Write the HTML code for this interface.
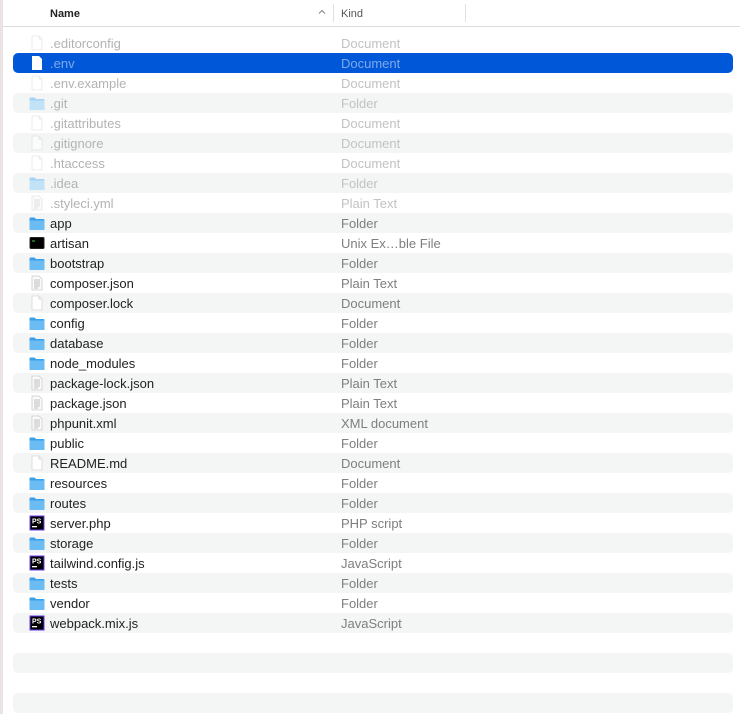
<!DOCTYPE html>
<html><head><meta charset="utf-8"><style>
*{margin:0;padding:0;box-sizing:border-box}
body{width:740px;height:714px;overflow:hidden;background:#fff;font-family:"Liberation Sans",Helvetica,sans-serif;position:relative}
.lb{position:absolute;left:0;top:0;width:3px;height:714px;background:#ebe3e3}
.hdr{position:absolute;left:3px;top:0;width:737px;height:27px;border-bottom:1px solid #dcdcdc;font-size:11px;color:#222}
.hdr .n{position:absolute;left:47px;top:8px;font-weight:bold}
.hdr .k{position:absolute;left:338px;top:8px;color:#555}
.hdr .d1{position:absolute;left:330px;top:4px;width:1px;height:18px;background:#e0e0e0}
.hdr .d2{position:absolute;left:462px;top:4px;width:1px;height:18px;background:#e0e0e0}
.hdr .ch{position:absolute;left:314px;top:7px;width:10px;height:10px}
.r{position:absolute;left:13px;width:720px;height:20px;font-size:13px;line-height:20px;color:#222}
.s{background:#f4f5f5;border-radius:5px}
.sel{background:#0058d8;border-radius:5px;color:#7fa9e8}
.sel .k{color:#7fa9e8!important}
.r .n{position:absolute;left:37px;top:1px}
.r .k{position:absolute;left:328px;top:1px;color:#7e7e7e}
.h .n{color:#b3b3b3}.h .k{color:#c2c2c2}
.i{position:absolute;left:16px;top:2px;width:16px;height:16px}
</style></head><body>
<div class="lb"></div>
<div class="hdr"><span class="n">Name</span><svg class="ch" viewBox="0 0 10 10"><path d="M2 6.5L5 3.5L8 6.5" stroke="#888" fill="none" stroke-width="1.1"/></svg><div class="d1"></div><span class="k">Kind</span><div class="d2"></div></div>

<svg width="0" height="0" style="position:absolute"><defs>
<symbol id="doc" viewBox="0 0 16 16"><path d="M3 1h7l3 3v11H3z" fill="#fff" stroke="#d8d8d8" stroke-width=".8"/><path d="M10 1v3h3" fill="#eee" stroke="#d8d8d8" stroke-width=".8"/></symbol>
<symbol id="txt" viewBox="0 0 16 16"><path d="M3 1h7l3 3v11H3z" fill="#fafafa" stroke="#ccc" stroke-width=".8"/><path d="M5 5h6M5 7h6M5 9h6M5 11h6M5 13h4" stroke="#aaa" stroke-width=".8"/></symbol>
<symbol id="fol" viewBox="0 0 16 16"><path d="M0.5 3.5a1 1 0 0 1 1-1h4l1.5 1.5h7.5a1 1 0 0 1 1 1v9a1 1 0 0 1-1 1h-13a1 1 0 0 1-1-1z" fill="#3a9fe6"/><path d="M0.5 5.5h15v8.5a1 1 0 0 1-1 1h-13a1 1 0 0 1-1-1z" fill="#6bbcf2"/></symbol>
<symbol id="folh" viewBox="0 0 16 16"><path d="M0.5 3.5a1 1 0 0 1 1-1h4l1.5 1.5h7.5a1 1 0 0 1 1 1v9a1 1 0 0 1-1 1h-13a1 1 0 0 1-1-1z" fill="#a6d3f3"/><path d="M0.5 5.5h15v8.5a1 1 0 0 1-1 1h-13a1 1 0 0 1-1-1z" fill="#c2e2f8"/></symbol>
<symbol id="exe" viewBox="0 0 16 16"><rect x="0.5" y="2" width="15" height="12" rx="1.5" fill="#222"/><rect x="1.5" y="3" width="13" height="10" fill="#000"/><path d="M3 6h3" stroke="#4c4" stroke-width="1"/></symbol>
<symbol id="ps" viewBox="0 0 16 16"><rect x="1" y="1" width="14" height="14" fill="#000" stroke="#6a3cf0" stroke-width="1"/><text x="3" y="8.5" font-size="7" font-weight="bold" fill="#fff" font-family="Liberation Sans">PS</text><rect x="3" y="11" width="5" height="1.3" fill="#fff"/></symbol>
</defs></svg>

<div class="r h" style="top:33px"><svg class="i" style="opacity:.6"><use href="#doc"/></svg><span class="n">.editorconfig</span><span class="k">Document</span></div>
<div class="r sel" style="top:53px"><svg class="i"><path d="M3 1h7l3 3v11H3z" fill="#fff"/></svg><span class="n">.env</span><span class="k">Document</span></div>
<div class="r h" style="top:73px"><svg class="i" style="opacity:.6"><use href="#doc"/></svg><span class="n">.env.example</span><span class="k">Document</span></div>
<div class="r h s" style="top:93px"><svg class="i"><use href="#folh"/></svg><span class="n">.git</span><span class="k">Folder</span></div>
<div class="r h" style="top:113px"><svg class="i" style="opacity:.6"><use href="#doc"/></svg><span class="n">.gitattributes</span><span class="k">Document</span></div>
<div class="r h s" style="top:133px"><svg class="i" style="opacity:.6"><use href="#doc"/></svg><span class="n">.gitignore</span><span class="k">Document</span></div>
<div class="r h" style="top:153px"><svg class="i" style="opacity:.6"><use href="#doc"/></svg><span class="n">.htaccess</span><span class="k">Document</span></div>
<div class="r h s" style="top:173px"><svg class="i"><use href="#folh"/></svg><span class="n">.idea</span><span class="k">Folder</span></div>
<div class="r h" style="top:193px"><svg class="i" style="opacity:.5"><use href="#txt"/></svg><span class="n">.styleci.yml</span><span class="k">Plain Text</span></div>
<div class="r s" style="top:213px"><svg class="i"><use href="#fol"/></svg><span class="n">app</span><span class="k">Folder</span></div>
<div class="r" style="top:233px"><svg class="i"><use href="#exe"/></svg><span class="n">artisan</span><span class="k">Unix Ex…ble File</span></div>
<div class="r s" style="top:253px"><svg class="i"><use href="#fol"/></svg><span class="n">bootstrap</span><span class="k">Folder</span></div>
<div class="r" style="top:273px"><svg class="i"><use href="#txt"/></svg><span class="n">composer.json</span><span class="k">Plain Text</span></div>
<div class="r s" style="top:293px"><svg class="i"><use href="#doc"/></svg><span class="n">composer.lock</span><span class="k">Document</span></div>
<div class="r" style="top:313px"><svg class="i"><use href="#fol"/></svg><span class="n">config</span><span class="k">Folder</span></div>
<div class="r s" style="top:333px"><svg class="i"><use href="#fol"/></svg><span class="n">database</span><span class="k">Folder</span></div>
<div class="r" style="top:353px"><svg class="i"><use href="#fol"/></svg><span class="n">node_modules</span><span class="k">Folder</span></div>
<div class="r s" style="top:373px"><svg class="i"><use href="#txt"/></svg><span class="n">package-lock.json</span><span class="k">Plain Text</span></div>
<div class="r" style="top:393px"><svg class="i"><use href="#txt"/></svg><span class="n">package.json</span><span class="k">Plain Text</span></div>
<div class="r s" style="top:413px"><svg class="i"><use href="#txt"/></svg><span class="n">phpunit.xml</span><span class="k">XML document</span></div>
<div class="r" style="top:433px"><svg class="i"><use href="#fol"/></svg><span class="n">public</span><span class="k">Folder</span></div>
<div class="r s" style="top:453px"><svg class="i"><use href="#doc"/></svg><span class="n">README.md</span><span class="k">Document</span></div>
<div class="r" style="top:473px"><svg class="i"><use href="#fol"/></svg><span class="n">resources</span><span class="k">Folder</span></div>
<div class="r s" style="top:493px"><svg class="i"><use href="#fol"/></svg><span class="n">routes</span><span class="k">Folder</span></div>
<div class="r" style="top:513px"><svg class="i"><use href="#ps"/></svg><span class="n">server.php</span><span class="k">PHP script</span></div>
<div class="r s" style="top:533px"><svg class="i"><use href="#fol"/></svg><span class="n">storage</span><span class="k">Folder</span></div>
<div class="r" style="top:553px"><svg class="i"><use href="#ps"/></svg><span class="n">tailwind.config.js</span><span class="k">JavaScript</span></div>
<div class="r s" style="top:573px"><svg class="i"><use href="#fol"/></svg><span class="n">tests</span><span class="k">Folder</span></div>
<div class="r" style="top:593px"><svg class="i"><use href="#fol"/></svg><span class="n">vendor</span><span class="k">Folder</span></div>
<div class="r s" style="top:613px"><svg class="i"><use href="#ps"/></svg><span class="n">webpack.mix.js</span><span class="k">JavaScript</span></div>
<div class="r s" style="top:653px"></div>
<div class="r s" style="top:693px"></div>
</body></html>
